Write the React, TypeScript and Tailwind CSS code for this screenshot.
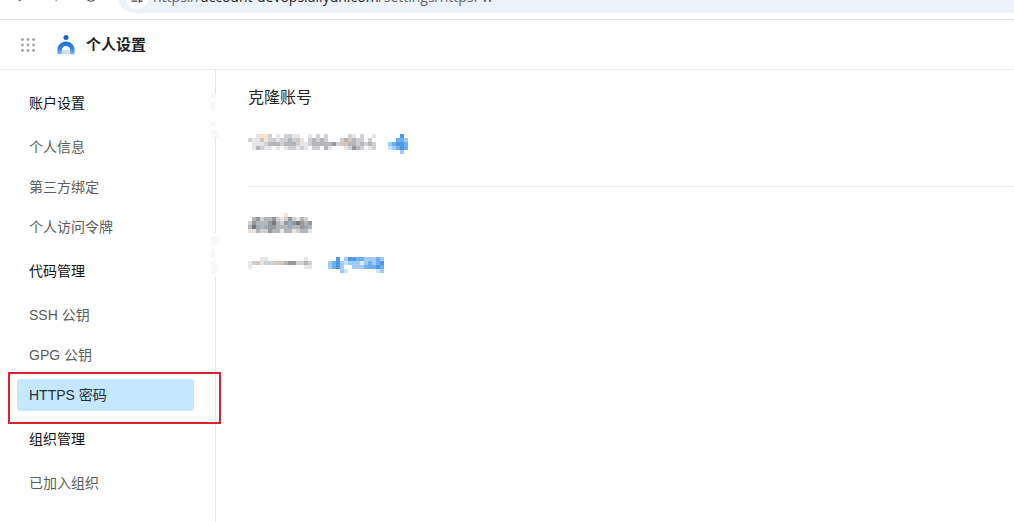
import { ArrowLeft, ArrowRight, RotateCw, SlidersHorizontal } from 'lucide-react';

type NavGroup = {
    title: string;
    items: { label: string; active?: boolean }[];
};

const groups: NavGroup[] = [
    {
        title: '账户设置',
        items: [{ label: '个人信息' }, { label: '第三方绑定' }, { label: '个人访问令牌' }],
    },
    {
        title: '代码管理',
        items: [{ label: 'SSH 公钥' }, { label: 'GPG 公钥' }, { label: 'HTTPS 密码', active: true }],
    },
    {
        title: '组织管理',
        items: [{ label: '已加入组织' }],
    },
];

// one letter per mosaic cell, "." is empty
const palette: Record<string, string> = {
    w: '#ffffff',
    q: '#f8f8f9',
    a: '#e6e6e8',
    b: '#cfd0d3',
    c: '#b4b6b9',
    d: '#97989b',
    k: '#77787c',
    e: '#f2e3d6',
    o: '#d5c6bb',
    f: '#dde8f2',
    g: '#9aabba',
    l: '#c5e6fd',
    m: '#a0cbf6',
    n: '#6daeef',
    p: '#4e98e6',
};

const accountCells = [
    '..aeeb.a.bbaa..a.b.b.....ba.b..a',
    'baaoebbabbcboa.bcbcb...bcocbb.b.',
    '.faabcccbcccbaabcccccdbooccbcbcb',
    '.acbaa.a.abbaba.bb.ca...abdcb.ab',
];
const accountActionCells = ['...p.', '..nnm', 'mnppn', 'lmnpn', '...m.'];
const titleCells = [
    '.........e......',
    '.cdbccdbabdbacb.',
    'bdcccdkcbdgdkdcd',
    'ckgcgddcccgccdgc',
    'eacbbdccaccabccf',
];
const statusCells = ['...aa.........a.', 'eboabbboocddbbcb', 'a.............aa'];
const statusActionCells = ['..p.mppnnmmmnm', 'mnpmlmmmfmnmnp', 'mnpm..mmmnnnpn', '...ml.......lm'];
const railTopCells = ['qw', 'ww', 'qw', 'qw', 'ww', 'ww', 'ww', 'qw', 'ww', 'qq', 'qq'];
const railBottomCells = ['ww', 'qq', 'qq', 'ww', 'qw', 'qw', 'ww', 'qw', 'qq', 'qq', 'ww'];

function Mosaic({ rows, className = '' }: { rows: string[]; className?: string }) {
    const width = rows[0].length * 4;
    const height = rows.length * 4;

    return (
        <svg
            width={width}
            height={height}
            viewBox={`0 0 ${width} ${height}`}
            shapeRendering="crispEdges"
            className={`shrink-0 ${className}`}
            aria-hidden="true"
        >
            {rows.map((row, y) =>
                row.split('').map((cell, x) =>
                    palette[cell] ? (
                        <rect key={`${x}-${y}`} x={x * 4} y={y * 4} width={4} height={4} fill={palette[cell]} />
                    ) : null
                )
            )}
        </svg>
    );
}

function Logo() {
    return (
        <svg width="18" height="20" viewBox="0 0 18 20" aria-hidden="true">
            <defs>
                <linearGradient id="arch" x1="0" y1="0" x2="0" y2="1">
                    <stop offset="0" stopColor="#1b6fd0" />
                    <stop offset="0.55" stopColor="#3385e4" />
                    <stop offset="1" stopColor="#80bbf5" />
                </linearGradient>
            </defs>
            <circle cx="9" cy="2.6" r="2.5" fill="#1766c4" />
            <path
                d="M0.4 19.2V15C0.4 10.2 4.1 6.6 9 6.6s8.6 3.6 8.6 8.4v4.2h-4.5V15c0-2.3-1.7-3.9-4.1-3.9S4.9 12.700 4.9 15v4.200z"
                fill="url(#arch)"
            />
            <path d="M4.900 15.200h8.200v4H4.900z" fill="#cbdff3" />
        </svg>
    );
}

function BrowserBar() {
    return (
        <div className="-mt-6 flex h-11 items-start overflow-hidden border-b border-[#e1e1e3] bg-white">
            <div className="flex h-10 w-[117px] shrink-0 items-center gap-5 pl-3 text-[#474747]">
                <button aria-label="后退">
                    <ArrowLeft size={16} />
                </button>
                <button aria-label="前进">
                    <ArrowRight size={16} className="text-[#a0a0a0]" />
                </button>
                <button aria-label="刷新">
                    <RotateCw size={14} />
                </button>
            </div>
            <div className="flex h-[37px] flex-1 items-end rounded-l-full bg-[#edf1fa] pb-1 pl-2">
                <span className="flex size-6 items-center justify-center rounded-full bg-white text-[#474747]">
                    <SlidersHorizontal size={14} />
                </span>
                <span className="pl-1 font-['Open_Sans',sans-serif] text-sm leading-6 whitespace-nowrap text-[#5f6368]">
                    https://<span className="text-[#1f1f1f]">account-devops.aliyun.com</span>/settings/httpsPw
                </span>
            </div>
        </div>
    );
}

function Header() {
    return (
        <header className="flex h-[50px] items-center border-b border-[#e8e8ea] pl-[21px]">
            <button aria-label="应用" className="mr-[22px]">
                <svg width="14" height="14" viewBox="0 0 14 14" fill="#a3a3a3" aria-hidden="true">
                    {[0, 1, 2].map((row) =>
                        [0, 1, 2].map((col) => (
                            <circle key={`${row}-${col}`} cx={1.5 + col * 5.5} cy={1.5 + row * 5.5} r="1.4" />
                        ))
                    )}
                </svg>
            </button>
            <Logo />
            <h1 className="ml-[11px] text-[15px] leading-6 font-bold text-[#1f1f1f]">个人设置</h1>
        </header>
    );
}

function Sidebar() {
    return (
        <aside className="relative w-[216px] shrink-0 border-r border-[#e6e6e8] pt-[13px] pr-[21px] pb-6 pl-[17px]">
            <nav className="flex flex-col gap-2 text-sm">
                {groups.map((group) => (
                    <section key={group.title} className="flex flex-col gap-2">
                        <h2 className="flex h-10 items-center px-3 text-[#111111]">{group.title}</h2>
                        {group.items.map(({ label, active }) => (
                            <a
                                key={label}
                                href="#"
                                className={`relative flex h-8 items-center rounded px-3 ${
                                    active ? 'bg-[#c5e7ff] text-[#262f3a]' : 'text-[#5c5c5c]'
                                }`}
                            >
                                {label}
                                {active && (
                                    <span className="absolute -top-[7px] -right-[27px] -bottom-[13px] -left-[9px] z-10 border-2 border-[#d9232e]" />
                                )}
                            </a>
                        ))}
                    </section>
                ))}
            </nav>
            <Mosaic rows={railTopCells} className="absolute top-6 -right-1" />
            <Mosaic rows={railBottomCells} className="absolute top-[163px] -right-1" />
        </aside>
    );
}

export default function App() {
    return (
        <div className="flex min-h-screen flex-col overflow-hidden bg-white font-['Liberation_Sans','Noto_Sans_CJK_SC',sans-serif]">
            <BrowserBar />
            <Header />
            <div className="flex flex-1">
                <Sidebar />
                <main className="flex-1 pt-4 pl-8">
                    <section className="border-b border-[#ebebed] pb-8">
                        <h2 className="text-base leading-6 text-[#262626]">克隆账号</h2>
                        <div className="mt-6 flex items-start gap-3">
                            <Mosaic rows={accountCells} />
                            <button aria-label="修改">
                                <Mosaic rows={accountActionCells} />
                            </button>
                        </div>
                    </section>
                    <section className="pt-[26px]">
                        <Mosaic rows={titleCells} />
                        <div className="mt-6 flex items-start gap-4">
                            <Mosaic rows={statusCells} />
                            <button aria-label="设置">
                                <Mosaic rows={statusActionCells} />
                            </button>
                        </div>
                    </section>
                </main>
            </div>
        </div>
    );
}
